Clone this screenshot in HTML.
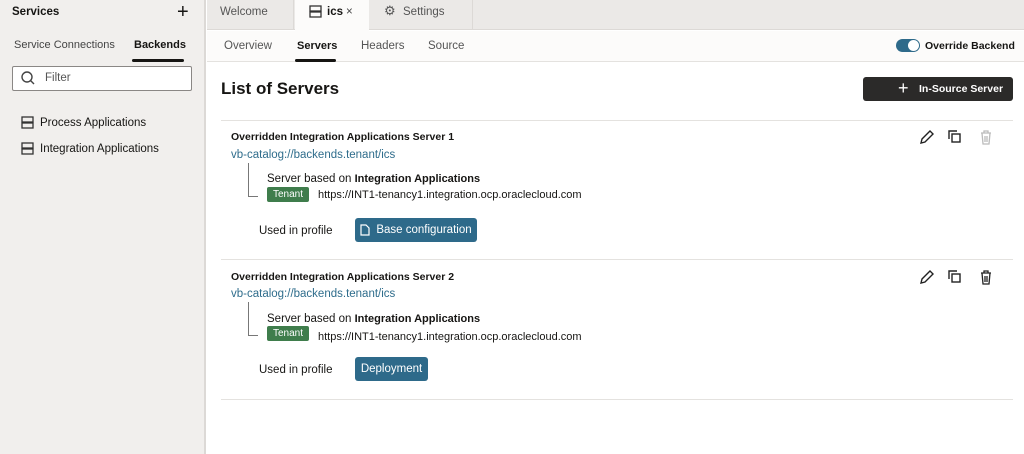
<!DOCTYPE html>
<html><head><style>
*{box-sizing:border-box;margin:0;padding:0}
body{width:1024px;height:454px;overflow:hidden;font-family:"Liberation Sans",sans-serif;font-size:11.5px;color:#161513;background:#fff;position:relative}
.a{position:absolute;white-space:nowrap}
.side{left:0;top:0;width:206px;height:454px;background:#f1efed;border-right:2px solid #dcd9d6}
.b{font-weight:bold}
.link{color:#2f6d8c}
.btn{background:#2e6a8a;color:#fff;border-radius:3px;display:flex;align-items:center;justify-content:center;font-size:11.5px}
.tag{background:#3f7d4c;color:#fff;font-size:10px;border-radius:2px;display:flex;align-items:center;justify-content:center}
.sep{height:1px;background:#e4e2df;left:221px;width:792px}
</style></head><body>
<div class="a side"></div>
<div class="a b" style="left:12px;top:6px;font-size:11.5px">Services</div>
<div class="a" style="left:177px;top:1px;font-size:20px;font-weight:300">+</div>
<div class="a" style="left:14px;top:39px;color:#444;font-size:11px">Service Connections</div>
<div class="a b" style="left:134px;top:39px;font-size:11px">Backends</div>
<div class="a" style="left:132px;top:59px;width:52px;height:3px;background:#161513;border-radius:2px"></div>
<div class="a" style="left:12px;top:66px;width:180px;height:25px;background:#fff;border:1px solid #8a8785;border-radius:2px"></div>
<svg class="a" style="left:20px;top:70px" width="16" height="16" viewBox="0 0 16 16"><circle cx="7" cy="7" r="5" fill="none" stroke="#444" stroke-width="1.4"/><path d="M10.5 10.5L14 14" stroke="#444" stroke-width="1.4"/></svg>
<div class="a" style="left:45px;top:72px;color:#555">Filter</div>
<svg class="a" style="left:21px;top:116px" width="13" height="13" viewBox="0 0 13 13"><rect x="1" y="1" width="11" height="5" fill="none" stroke="#333" stroke-width="1.3"/><rect x="1" y="7" width="11" height="5" fill="none" stroke="#333" stroke-width="1.3"/></svg>
<div class="a" style="left:40px;top:117px">Process Applications</div>
<svg class="a" style="left:21px;top:142px" width="13" height="13" viewBox="0 0 13 13"><rect x="1" y="1" width="11" height="5" fill="none" stroke="#333" stroke-width="1.3"/><rect x="1" y="7" width="11" height="5" fill="none" stroke="#333" stroke-width="1.3"/></svg>
<div class="a" style="left:40px;top:143px">Integration Applications</div>

<div class="a" style="left:207px;top:0;width:817px;height:30px;background:#ebe9e7;border-bottom:1px solid #dcd9d6"></div>
<div class="a" style="left:207px;top:0;width:87px;height:30px;border-right:1px solid #dcd9d6"></div>
<div class="a" style="left:220px;top:6px;color:#555">Welcome</div>
<div class="a" style="left:295px;top:0;width:74px;height:31px;background:#fcfbfa"></div>
<svg class="a" style="left:309px;top:5px" width="13" height="13" viewBox="0 0 13 13"><rect x="1" y="1" width="11" height="5" fill="none" stroke="#333" stroke-width="1.3"/><rect x="1" y="7" width="11" height="5" fill="none" stroke="#333" stroke-width="1.3"/></svg>
<div class="a b" style="left:327px;top:6px">ics</div>
<div class="a" style="left:346px;top:6px;color:#444">×</div>
<div class="a" style="left:370px;top:0;width:103px;height:30px;border-right:1px solid #dcd9d6"></div>
<div class="a" style="left:384px;top:3px;font-size:13px;color:#555">⚙</div>
<div class="a" style="left:403px;top:6px;color:#555">Settings</div>

<div class="a" style="left:207px;top:31px;width:817px;height:31px;background:#fcfbfa;border-bottom:1px solid #e4e2df"></div>
<div class="a" style="left:224px;top:40px;color:#555">Overview</div>
<div class="a b" style="left:297px;top:40px;font-size:11px">Servers</div>
<div class="a" style="left:295px;top:59px;width:41px;height:3px;background:#161513;border-radius:2px"></div>
<div class="a" style="left:361px;top:40px;color:#555">Headers</div>
<div class="a" style="left:428px;top:40px;color:#555">Source</div>
<div class="a" style="left:896px;top:39px;width:24px;height:13px;background:#2e6a8a;border-radius:7px"></div>
<div class="a" style="left:908px;top:40px;width:11px;height:11px;background:#fff;border-radius:6px"></div>
<div class="a b" style="left:925px;top:40px;font-size:10.5px">Override Backend</div>

<div class="a b" style="left:221px;top:79px;font-size:17px">List of Servers</div>
<div class="a" style="left:863px;top:77px;width:150px;height:24px;background:#2b2a29;border-radius:3px;color:#fff;font-weight:bold;font-size:10.5px;padding-left:56px;line-height:24px">In-Source Server</div>
<div class="a" style="left:898px;top:78px;color:#fff;font-size:18px;line-height:20px">+</div>

<div class="a sep" style="top:120px"></div>
<div class="a b" style="left:231px;top:131px;font-size:10.5px">Overridden Integration Applications Server 1</div>
<div class="a link" style="left:231px;top:149px">vb-catalog://backends.tenant/ics</div>
<div class="a" style="left:248px;top:163px;width:10px;height:34px;border-left:1px solid #777;border-bottom:1px solid #777"></div>
<div class="a" style="left:267px;top:173px">Server based on <b style="font-size:11px">Integration Applications</b></div>
<div class="a tag" style="left:267px;top:187px;width:42px;height:15px">Tenant</div>
<div class="a" style="left:318px;top:189px;font-size:11px">https://INT1-tenancy1.integration.ocp.oraclecloud.com</div>
<div class="a" style="left:259px;top:225px">Used in profile</div>
<div class="a btn" style="left:355px;top:218px;width:122px;height:24px"><svg width="10" height="12" viewBox="0 0 10 12" style="margin-right:6px"><path d="M1 1h5l3 3v7H1z" fill="none" stroke="#fff" stroke-width="1.2"/></svg>Base configuration</div>

<div class="a sep" style="top:259px"></div>
<div class="a b" style="left:231px;top:271px;font-size:10.5px">Overridden Integration Applications Server 2</div>
<div class="a link" style="left:231px;top:288px">vb-catalog://backends.tenant/ics</div>
<div class="a" style="left:248px;top:302px;width:10px;height:34px;border-left:1px solid #777;border-bottom:1px solid #777"></div>
<div class="a" style="left:267px;top:313px">Server based on <b style="font-size:11px">Integration Applications</b></div>
<div class="a tag" style="left:267px;top:326px;width:42px;height:15px">Tenant</div>
<div class="a" style="left:318px;top:331px;font-size:11px">https://INT1-tenancy1.integration.ocp.oraclecloud.com</div>
<div class="a" style="left:259px;top:364px">Used in profile</div>
<div class="a btn" style="left:355px;top:357px;width:73px;height:24px">Deployment</div>
<div class="a sep" style="top:399px"></div>

<svg class="a" style="left:918px;top:128px" width="80" height="18" viewBox="0 0 80 18">
<path d="M3 15l1-4 8-8 3 3-8 8z" fill="none" stroke="#222" stroke-width="1.4"/>
<rect x="34" y="6" width="8" height="8" fill="none" stroke="#222" stroke-width="1.4"/><path d="M31 11V3h8" fill="none" stroke="#222" stroke-width="1.4"/>
<path d="M63 5h10M66 5V3h4v2M64 5l1 11h6l1-11M67 8v6M69 8v6" fill="none" stroke="#bbb" stroke-width="1.3"/>
</svg>
<svg class="a" style="left:918px;top:268px" width="80" height="18" viewBox="0 0 80 18">
<path d="M3 15l1-4 8-8 3 3-8 8z" fill="none" stroke="#222" stroke-width="1.4"/>
<rect x="34" y="6" width="8" height="8" fill="none" stroke="#222" stroke-width="1.4"/><path d="M31 11V3h8" fill="none" stroke="#222" stroke-width="1.4"/>
<path d="M63 5h10M66 5V3h4v2M64 5l1 11h6l1-11M67 8v6M69 8v6" fill="none" stroke="#222" stroke-width="1.3"/>
</svg>
</body></html>
